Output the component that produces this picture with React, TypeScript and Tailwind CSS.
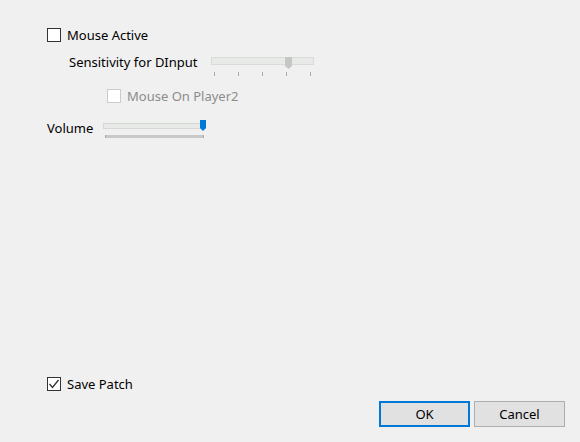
import React from 'react';

const font = { fontFamily: '"Noto Sans", "Liberation Sans", sans-serif' };

const CheckBox: React.FC<{ checked?: boolean; disabled?: boolean }> = ({ checked, disabled }) => (
  <div
    className={`w-[14px] h-[14px] shrink-0 border bg-white flex items-center justify-center ${
      disabled ? 'border-[#cccccc]' : 'border-[#333333]'
    }`}
  >
    {checked && (
      <svg width="12" height="12" viewBox="0 0 12 12">
        <polyline points="1.5,6 4.5,9.5 10.5,2" fill="none" stroke="#333333" strokeWidth="1.3" />
      </svg>
    )}
  </div>
);

const Thumb: React.FC<{ color: string; w: number; h: number }> = ({ color, w, h }) => (
  <svg width={w} height={h} viewBox={`0 0 ${w} ${h}`}>
    <polygon points={`0,0 ${w},0 ${w},${h - 3} ${w / 2},${h} 0,${h - 3}`} fill={color} />
  </svg>
);

export default function App() {
  return (
    <div className="w-[580px] h-[442px] bg-[#f0f0f0] flex flex-col text-[13px] text-black" style={font}>
      {/* Mouse Active */}
      <div className="flex items-center gap-[6px] h-[14px] mt-[28px] ml-[47px]">
        <CheckBox />
        <span className="leading-[14px]">Mouse Active</span>
      </div>

      {/* Sensitivity */}
      <div className="flex items-start h-[22px] mt-[13px] ml-[69px]">
        <span className="leading-[14px] w-[142px]">Sensitivity for DInput</span>
        <div className="flex flex-col w-[103px] mt-[2px]">
          <div className="relative h-[8px] bg-[#e7eae7] border border-[#dadada]">
            <div className="absolute left-[73px] top-[-1px]">
              <Thumb color="#c6c6c6" w={7} h={12} />
            </div>
          </div>
          <div className="flex justify-between px-[3px] mt-[7px]">
            {[0, 1, 2, 3, 4].map((i) => (
              <div key={i} className="w-px h-[4px] bg-[#a8a8a8]" />
            ))}
          </div>
        </div>
      </div>

      {/* Mouse On Player2 */}
      <div className="flex items-center gap-[6px] h-[14px] mt-[12px] ml-[107px] text-[#8c8c8c]">
        <CheckBox disabled />
        <span className="leading-[14px]">Mouse On Player2</span>
      </div>

      {/* Volume */}
      <div className="flex items-start mt-[17px] ml-[47px]">
        <span className="leading-[14px] w-[56px] mt-[1px]">Volume</span>
        <div className="flex flex-col w-[103px]">
          <div className="relative h-[6px] mt-[3px] bg-[#e7eae7] border border-[#d6d6d6]">
            <div className="absolute right-[-1px] top-[-4px]">
              <Thumb color="#0078d7" w={6} h={11} />
            </div>
          </div>
          <div className="h-[3px] mt-[6px] mx-[2px] bg-[#c8c8c8] border-x border-[#a8a8a8]" />
        </div>
      </div>

      <div className="flex-1" />

      {/* Save Patch */}
      <div className="flex items-center gap-[6px] h-[14px] ml-[47px]">
        <CheckBox checked />
        <span className="leading-[14px]">Save Patch</span>
      </div>

      {/* Buttons */}
      <div className="flex justify-end gap-[4px] mt-[10px] mr-[15px] mb-[15px]">
        <button className="w-[91px] h-[26px] bg-[#e1e1e1] border-2 border-[#0078d7] leading-none">OK</button>
        <button className="w-[91px] h-[26px] bg-[#e1e1e1] border border-[#adadad] leading-none">Cancel</button>
      </div>
    </div>
  );
}
